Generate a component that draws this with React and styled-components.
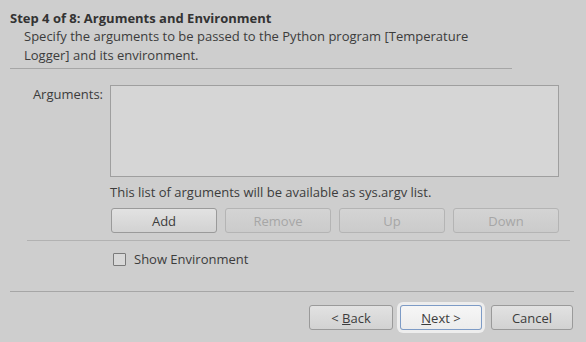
import React from 'react';
import styled, { createGlobalStyle } from 'styled-components';

const Global = createGlobalStyle`
  html, body {
    margin: 0;
    padding: 0;
    background: #cecece;
  }
  body {
    font-family: "Open Sans", "Liberation Sans", sans-serif;
    color: #3c3c3c;
  }
`;

const Dialog = styled.div`
  width: 586px;
  height: 342px;
  background: #cecece;
  box-sizing: border-box;
  display: flex;
  flex-direction: column;
`;

const Header = styled.div`
  padding: 9px 10px 0 10px;
`;

const Title = styled.div`
  font-weight: bold;
  font-size: 13px;
  line-height: 18px;
  color: #333;
`;

const Subtitle = styled.div`
  padding-left: 14px;
  font-size: 13px;
  line-height: 19px;
  color: #3c3c3c;
`;

const Rule = styled.div`
  height: 0;
  border-top: 1px solid ${p => p.light ? '#b2b2b2' : '#a6a6a6'};
  margin: ${p => p.margin};
  width: ${p => p.width}px;
`;

const Body = styled.div`
  display: grid;
  grid-template-columns: 110px 449px;
  padding-top: 16px;
  row-gap: 6px;
`;

const Label = styled.div`
  font-size: 13px;
  text-align: right;
  padding-right: 7px;
  line-height: 18px;
`;

const ListBox = styled.div`
  height: 90px;
  border: 1px solid #9f9f9f;
  background: #d6d6d6;
`;

const Hint = styled.div`
  grid-column: 2;
  font-size: 13px;
  line-height: 18px;
`;

const ButtonRow = styled.div`
  grid-column: 2;
  display: grid;
  grid-template-columns: repeat(4, 106px);
  column-gap: 8px;
  padding-left: 1px;
  margin-top: 1px;
`;

const Button = styled.button`
  height: 25px;
  box-sizing: border-box;
  border: 1px solid ${p => p.disabled ? '#b4b4b4' : '#9a9a9a'};
  border-radius: 3px;
  background: ${p => p.disabled
    ? 'linear-gradient(#d4d4d4, #cbcbcb)'
    : 'linear-gradient(#e2e2e2, #d2d2d2)'};
  color: ${p => p.disabled ? '#a6a6a6' : '#3c3c3c'};
  font-family: inherit;
  font-size: 13px;
  padding: 0;
  cursor: default;
`;

const CheckRow = styled.label`
  display: flex;
  align-items: center;
  gap: 8px;
  padding: 11px 0 0 113px;
  height: 14px;
  font-size: 13px;
`;

const Box = styled.span`
  width: 11px;
  height: 11px;
  border: 1px solid #7a7a7a;
  background: #d8d8d8;
  border-radius: 1px;
`;

const Spacer = styled.div`
  flex: 1;
`;

const Footer = styled.div`
  display: flex;
  justify-content: flex-end;
  gap: 7px;
  padding: 13px 13px 13px 0;
`;

const FootButton = styled(Button)`
  width: ${p => p.w}px;
  ${p => p.focus && `
    border-color: #7d9bc6;
    background: linear-gradient(#f6f6f6, #ececec);
    box-shadow: 0 0 0 3px #ededed;
    margin-right: 2px;
  `}
`;

const Key = styled.span`
  text-decoration: underline;
`;

export default function App() {
  return (
    <Dialog>
      <Global />
      <Header>
        <Title>Step 4 of 8: Arguments and Environment</Title>
        <Subtitle>
          Specify the arguments to be passed to the Python program [Temperature<br />
          Logger] and its environment.
        </Subtitle>
      </Header>
      <Rule margin="3px 0 0 10px" width={502} />
      <Body>
        <Label>Arguments:</Label>
        <ListBox />
        <Hint>This list of arguments will be available as sys.argv list.</Hint>
        <ButtonRow>
          <Button>Add</Button>
          <Button disabled>Remove</Button>
          <Button disabled>Up</Button>
          <Button disabled>Down</Button>
        </ButtonRow>
      </Body>
      <Rule light margin="7px 0 0 27px" width={543} />
      <CheckRow>
        <Box />
        Show Environment
      </CheckRow>
      <Rule margin="25px 0 0 10px" width={564} />
      <Spacer />
      <Footer>
        <FootButton w={84}>&lt; <Key>B</Key>ack</FootButton>
        <FootButton w={82} focus><Key>N</Key>ext &gt;</FootButton>
        <FootButton w={82}>Cancel</FootButton>
      </Footer>
    </Dialog>
  );
}
